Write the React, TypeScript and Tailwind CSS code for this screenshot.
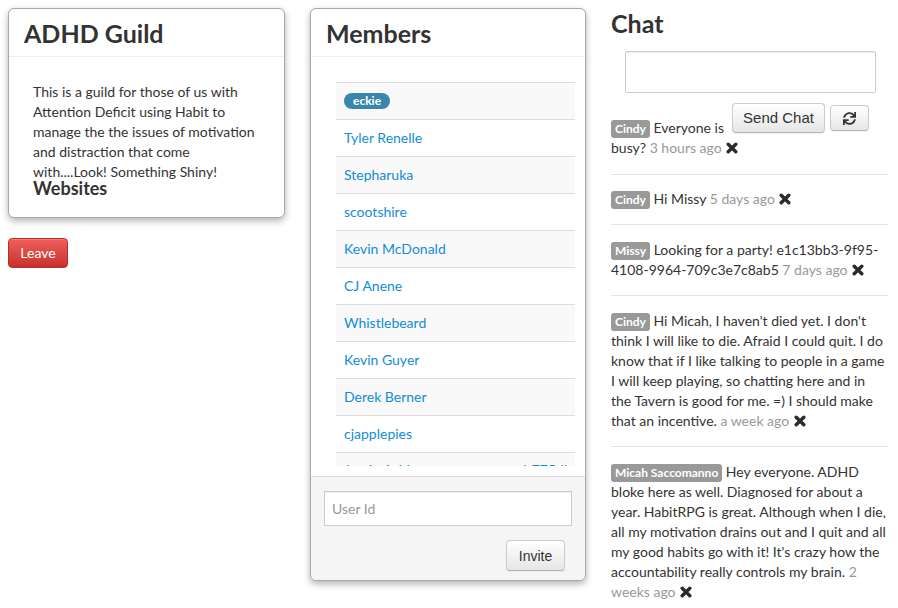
import React from "react";
import { FaSync } from "react-icons/fa";

const members = [
  "Tyler Renelle",
  "Stepharuka",
  "scootshire",
  "Kevin McDonald",
  "CJ Anene",
  "Whistlebeard",
  "Kevin Guyer",
  "Derek Berner",
  "cjapplepies",
];

function Label({ children }: { children: React.ReactNode }) {
  return (
    <span className="inline-block bg-[#999999] text-white font-bold text-[12px] leading-[14px] px-[4px] py-[2px] rounded-[3px] align-baseline">
      {children}
    </span>
  );
}

function Time({ children }: { children: React.ReactNode }) {
  return <span className="text-[#999999]">{children}</span>;
}

function X() {
  return (
    <svg width="12" height="12" viewBox="0 0 12 12" className="inline-block align-[-1px] ml-[1px]">
      <path d="M2.2 2.2 L9.8 9.8 M9.8 2.2 L2.2 9.8" stroke="#2a2a2a" strokeWidth="3.4" strokeLinecap="round" />
    </svg>
  );
}

function Panel({ title, children, className }: { title: string; children: React.ReactNode; className?: string }) {
  return (
    <div
      className={
        "bg-white border border-[#a8a8a8] rounded-[6px] shadow-[0_3px_7px_rgba(0,0,0,0.3)] flex flex-col " +
        (className ?? "")
      }
    >
      <div className="h-[48px] flex items-center px-[15px] border-b border-[#eeeeee]">
        <h3 className="text-[25px] leading-[30px] font-bold text-[#333333]">{title}</h3>
      </div>
      {children}
    </div>
  );
}

const btnDefault =
  "bg-gradient-to-b from-white to-[#e6e6e6] border border-[#cccccc] border-b-[#b3b3b3] rounded-[4px] shadow-[inset_0_1px_0_rgba(255,255,255,0.2),0_1px_2px_rgba(0,0,0,0.05)] text-[#333333]";

export default function App() {
  return (
    <div
      className="w-[898px] h-[608px] bg-white overflow-hidden text-[14px] leading-[20px] text-[#333333]"
      style={{ fontFamily: "Lato, 'Open Sans', sans-serif" }}
    >
      <div className="flex gap-[25px] pl-[8px]">
        {/* Column 1 */}
        <div className="w-[277px] pt-[8px]">
          <Panel title="ADHD Guild">
            <div className="pt-[25px] pl-[24px] pr-[24px] pb-[19px]">
              <p>
                This is a guild for those of us with Attention Deficit using Habit to manage the the issues of
                motivation and distraction that come with....Look! Something Shiny!
              </p>
              <h4 className="text-[18px] leading-[20px] font-bold mt-[-4px]">Websites</h4>
            </div>
          </Panel>
          <button
            className="mt-[20px] w-[60px] h-[30px] rounded-[4px] text-white text-[14px] bg-gradient-to-b from-[#ee5f5b] to-[#c9302c] border border-[#b52f2a] shadow-[inset_0_1px_0_rgba(255,255,255,0.2)]"
          >
            Leave
          </button>
        </div>

        {/* Column 2 */}
        <div className="w-[276px] pt-[8px]">
          <Panel title="Members" className="h-[573px]">
            <div className="pt-[25px] pl-[25px] pr-[10px] pb-[10px]">
              <div className="h-[384px] overflow-hidden">
                <div className="h-[37px] border-t border-[#dddddd] bg-[#f9f9f9] flex items-center px-[8px]">
                  <span className="inline-block bg-[#3a87ad] text-white font-bold text-[12px] leading-[14px] px-[9px] py-[1px] rounded-full">
                    eckie
                  </span>
                </div>
                {members.map((m, i) => (
                  <div
                    key={m}
                    className={
                      "h-[37px] border-t border-[#dddddd] flex items-center px-[8px] " +
                      (i % 2 === 1 ? "bg-[#f9f9f9]" : "bg-white")
                    }
                  >
                    <a className="text-[#128dd6]">{m}</a>
                  </div>
                ))}
                <div className="h-[37px] border-t border-[#dddddd] bg-[#f9f9f9] flex items-start pt-[7px] justify-between px-[8px]">
                  <a className="text-[#128dd6]">Justin Ashley</a>
                  <a className="text-[#128dd6]">...d-775dl</a>
                </div>
              </div>
            </div>
            <div className="flex-1 bg-[#f5f5f5] border-t border-[#dddddd] rounded-b-[6px] pl-[13px] pr-[14px] pt-[14px]">
              <input
                placeholder="User Id"
                className="w-[248px] h-[35px] bg-white border border-[#cccccc] px-[7px] text-[14px] placeholder:text-[#999999] outline-none shadow-[inset_0_1px_1px_rgba(0,0,0,0.075)]"
              />
              <div className="flex justify-end mt-[14px] pr-[6px]">
                <button
                  className={btnDefault + " w-[59px] h-[31px] text-[14px]"}
                  style={{ fontFamily: "'Liberation Sans', Arial, sans-serif" }}
                >
                  Invite
                </button>
              </div>
            </div>
          </Panel>
        </div>

        {/* Column 3 */}
        <div className="w-[277px]">
          <h3 className="mt-[8px] text-[25px] leading-[30px] font-bold text-[#333333]">Chat</h3>
          <textarea className="block mt-[13px] ml-[14px] w-[251px] h-[42px] border border-[#cccccc] rounded-[2px] resize-none outline-none shadow-[inset_0_1px_1px_rgba(0,0,0,0.075)]" />
          <div className="float-right mt-[10px] mr-[19px] flex items-start gap-[5px]">
            <button
              className={btnDefault + " w-[93px] h-[30px] text-[15px]"}
              style={{ fontFamily: "'Liberation Sans', Arial, sans-serif" }}
            >
              Send Chat
            </button>
            <button className={btnDefault + " w-[39px] h-[26px] mt-[2px] flex items-center justify-center"}>
              <FaSync size={13} className="text-[#333]" />
            </button>
          </div>
          <div className="mt-[25px]">
            <div className="pb-[16px] mb-[14px] border-b border-[#e5e5e5]">
              <Label>Cindy</Label> Everyone is busy? <Time>3 hours ago</Time> <X />
            </div>
            <div className="pb-[15px] mb-[15px] border-b border-[#e5e5e5]">
              <Label>Cindy</Label> Hi Missy <Time>5 days ago</Time> <X />
            </div>
            <div className="pb-[15px] mb-[15px] border-b border-[#e5e5e5]">
              <Label>Missy</Label> Looking for a party! e1c13bb3-9f95-4108-9964-709c3e7c8ab5{" "}
              <Time>7 days ago</Time> <X />
            </div>
            <div className="pb-[15px] mb-[15px] border-b border-[#e5e5e5]">
              <Label>Cindy</Label> Hi Micah, I haven't died yet. I don't think I will like to die. Afraid I could
              quit. I do know that if I like talking to people in a game I will keep playing, so chatting here and in
              the Tavern is good for me. =) I should make that an incentive. <Time>a week ago</Time> <X />
            </div>
            <div className="pb-[15px]">
              <Label>Micah Saccomanno</Label> Hey everyone. ADHD bloke here as well. Diagnosed for about a year.
              HabitRPG is great. Although when I die, all my motivation drains out and I quit and all my good habits go
              with it! It's crazy how the accountability really controls my brain. <Time>2 weeks ago</Time> <X />
            </div>
          </div>
        </div>
      </div>
    </div>
  );
}
